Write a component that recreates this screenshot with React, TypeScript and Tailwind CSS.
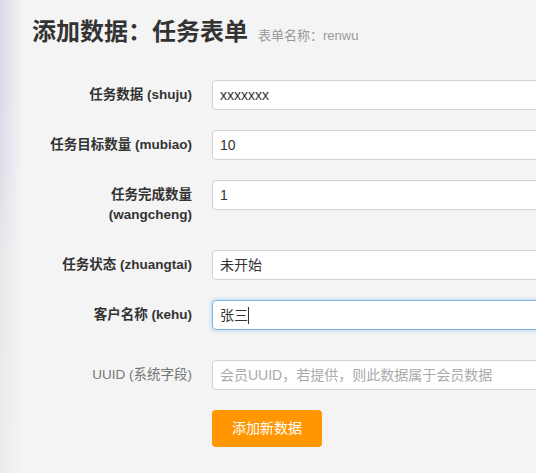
import React from 'react';

const FONT = '"Liberation Sans", "Noto Sans CJK SC", sans-serif';

const FIELDS = [
    { id: 'shuju', label: ['任务数据 (shuju)'], value: 'xxxxxxx' },
    { id: 'mubiao', label: ['任务目标数量 (mubiao)'], value: '10' },
    { id: 'wangcheng', label: ['任务完成数量', '(wangcheng)'], value: '1' },
    { id: 'zhuangtai', label: ['任务状态 (zhuangtai)'], value: '未开始' },
    { id: 'kehu', label: ['客户名称 (kehu)'], value: '张三', focused: true },
];

const App = () => {
    return (
        <div className="w-[536px] h-[473px] overflow-hidden bg-[#f4f4f4] flex" style={{ fontFamily: FONT }}>
            {/* left edge shadow */}
            <div className="w-[22px] shrink-0 bg-[linear-gradient(to_bottom,#d9d8e6_0%,#dddce8_35%,#e8e8eb_55%,#ebebec_100%)]">
                <div className="h-full bg-gradient-to-r from-transparent to-[#f4f4f4]" />
            </div>

            <div className="flex-1 pl-[10px] pt-[15px]">
                {/* Header */}
                <div className="flex items-baseline gap-[10px] h-[34px]">
                    <h1 className="text-[24px] font-bold text-[#333] leading-[34px]">添加数据：任务表单</h1>
                    <span className="text-[13px] text-[#999]">表单名称：renwu</span>
                </div>

                <div className="mt-[31px] flex flex-col">
                    {FIELDS.map((f) => (
                        <div key={f.id} className="flex mb-[20px]">
                            <div className="w-[180px] shrink-0 text-right pr-[20px] py-[5px] text-[13.5px] leading-[20px] font-bold text-[#333]">
                                {f.label.map((l) => (
                                    <div key={l}>{l}</div>
                                ))}
                            </div>
                            <div
                                className={`w-[420px] shrink-0 h-[30px] bg-white rounded-[4px] border px-[7px] flex items-center text-[14px] text-[#333] ${f.focused ? 'border-[#7cb6e8] shadow-[0_0_4px_rgba(102,175,233,0.6)]' : 'border-[#d0d0d0]'}`}
                            >
                                {f.value}
                                {f.focused && <span className="w-px h-[17px] bg-[#333]" />}
                            </div>
                        </div>
                    ))}

                    {/* system field */}
                    <div className="flex mt-[10px] mb-[20px]">
                        <div className="w-[180px] shrink-0 text-right pr-[20px] py-[5px] text-[13.5px] leading-[20px] text-[#777]">
                            UUID (系统字段)
                        </div>
                        <div className="w-[420px] shrink-0 h-[30px] bg-white rounded-[4px] border border-[#d0d0d0] px-[7px] flex items-center text-[14px] text-[#aaa]">
                            会员UUID，若提供，则此数据属于会员数据
                        </div>
                    </div>

                    <div className="pl-[180px]">
                        <button className="w-[110px] h-[37px] rounded-[4px] bg-[#ff9602] text-white text-[14px]">
                            添加新数据
                        </button>
                    </div>
                </div>
            </div>
        </div>
    );
};

export default App;
